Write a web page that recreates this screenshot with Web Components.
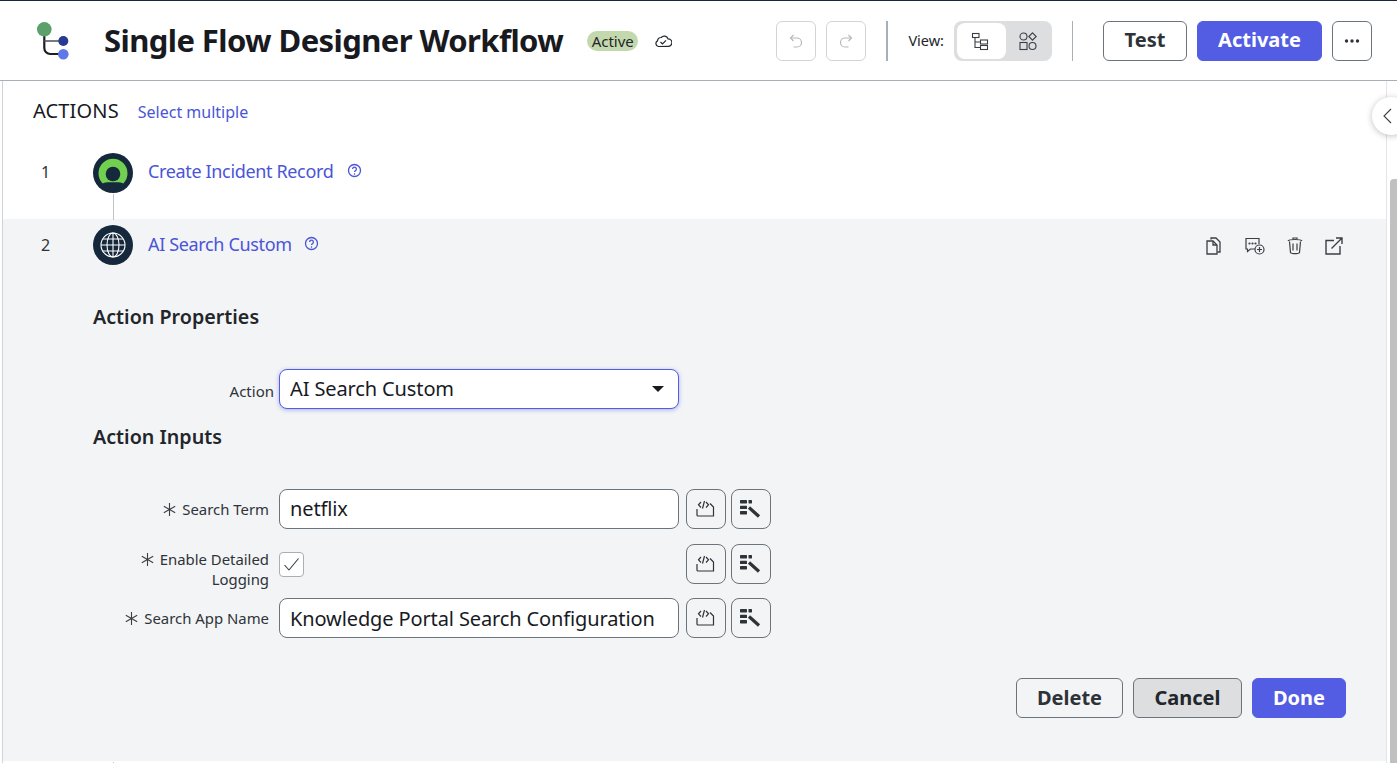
<!DOCTYPE html>
<html><head><meta charset="utf-8">
<style>
html,body{margin:0;padding:0;background:#fff;overflow:hidden}
body{font-family:"Noto Sans",sans-serif;color:#181a1f}
</style></head><body>

<flow-app></flow-app>

<script>
const sh=(el,html)=>{el.attachShadow({mode:'open'}).innerHTML=html;};
const S='fill="none" stroke="currentColor"';
const sym={
 undo:`<svg width="16" height="16" viewBox="0 0 16 16" ${S} stroke-width="1.2"><path d="M5.5 2 2.5 5l3 3"/><path d="M3 5h6a4.5 4.5 0 0 1 0 9H5.5"/></svg>`,
 redo:`<svg width="16" height="16" viewBox="0 0 16 16" ${S} stroke-width="1.2"><path d="M10.500 2 13.500 5l-3 3"/><path d="M13 5H7a4.500 4.500 0 0 0 0 9h3.500"/></svg>`,
 tree:`<svg width="20" height="20" viewBox="0 0 20 20" ${S} stroke-width="1.1"><rect x="2.500" y="2.500" width="6.500" height="4"/><rect x="10.500" y="9" width="7" height="4"/><rect x="10.500" y="14.500" width="7" height="4"/><path d="M5 6.500V16.500h5.500M5 11h5.500"/></svg>`,
 shapes:`<svg width="20" height="20" viewBox="0 0 20 20" ${S} stroke-width="1.1"><circle cx="5.500" cy="5.500" r="3.500"/><path d="M14.500 1.800 18.200 5.500 14.500 9.200 10.800 5.500Z"/><rect x="2" y="11.500" width="7" height="7"/><circle cx="14.500" cy="15" r="3.500"/></svg>`,
 cloud:`<svg width="18" height="16" viewBox="0 0 18 16" ${S} stroke-width="1.2"><path d="M4.500 13.500a3 3 0 0 1-1-5.600 3.400 3.400 0 0 1 3.700-3.400A4 4 0 0 1 14 5.800a3.800 3.800 0 0 1 .2 7.600Z"/><path d="m6.500 9 2 2 3.500-3.600"/></svg>`,
 help:`<svg width="15" height="15" viewBox="0 0 15 15" ${S} stroke-width="1.3"><circle cx="7.500" cy="7.500" r="6"/><path d="M5.600 6a1.900 1.900 0 1 1 2.900 1.600c-.7.400-1 .8-1 1.500"/><circle cx="7.500" cy="11" r=".5" fill="currentColor" stroke-width=".6"/></svg>`,
 copy:`<svg width="18" height="20" viewBox="0 0 18 20" ${S} stroke-width="1.300"><path d="M6 3.500V2h5l4 4v10h-2.500"/><path d="M2 5h6l4 4v9H2Z"/><path d="M8 5v4h4"/></svg>`,
 comment:`<svg width="22" height="20" viewBox="0 0 22 20" ${S} stroke-width="1.200"><path d="M11 13H6.500L3.500 15.500V13H2V2.500h13V8"/><circle cx="5.500" cy="7.500" r=".5"/><circle cx="8.500" cy="7.500" r=".5"/><circle cx="11.500" cy="7.500" r=".5"/><circle cx="15.500" cy="13.500" r="4.500"/><path d="M15.500 11v5M13 13.500h5"/></svg>`,
 trash:`<svg width="18" height="20" viewBox="0 0 18 20" ${S} stroke-width="1.200"><path d="M2 5c1-2 13-2 14 0"/><path d="M7 3.200V2h4v1.200"/><path d="M3.500 5.500 4.500 16.500c1 1.600 8 1.600 9 0l1-11"/><path d="M7 7.500v7M11 7.500v7"/></svg>`,
 open:`<svg width="20" height="20" viewBox="0 0 20 20" ${S} stroke-width="1.400"><path d="M10 4.500H2v13.500h14v-8"/><path d="M7.500 12.500 18 2M12 2h6v6"/></svg>`,
 code:`<svg width="20" height="20" viewBox="0 0 20 20" ${S} stroke-width="1.2"><path d="M1 10v6a1 1 0 0 0 1 1h15.500V8L14 4.500"/><path d="M5 3 2.500 5.800 5 8.500M8.500 2 6.500 9.500M10 3l2.500 2.800L10 8.500"/></svg>`,
 wand:`<svg width="22" height="20" viewBox="0 0 22 20"><g fill="currentColor"><rect x="0" y="1" width="7" height="3.400" rx=".6"/><rect x="8.500" y="1" width="3.500" height="3.400" rx=".6"/><rect x="0" y="6.700" width="7" height="3.400" rx=".6"/><rect x="0" y="12" width="7" height="3.400" rx=".6"/></g><path d="M9 8.500 19 17.500" stroke="currentColor" stroke-width="3.200" fill="none"/></svg>`,
 globe:`<svg width="26" height="26" viewBox="0 0 26 26" fill="none" stroke="#fff" stroke-width="1.100"><circle cx="13" cy="13" r="12"/><ellipse cx="13" cy="13" rx="6" ry="12"/><path d="M13 1v24M1 13h24M3 7h20M3 19h20"/></svg>`,
 logo:`<svg width="40" height="40" viewBox="0 0 40 40"><path fill="#71d04f" d="M9.700 30.400A14.500 14.500 0 1 1 30.300 30.400C27 28.800 24 29.200 20 29.200S13 28.800 9.700 30.400Z"/><circle cx="20" cy="21" r="7.300" fill="#16283c"/></svg>`,
 star:`<svg width="13" height="13" viewBox="0 0 13 13" fill="none" stroke="currentColor" stroke-width="1.100"><path d="M6.500 0v13M.8 3.200 12.200 9.800M.8 9.800 12.200 3.200"/></svg>`
};
class XIcon extends HTMLElement{connectedCallback(){if(this.shadowRoot)return;
  sh(this,`<style>:host{display:inline-flex;align-items:center;justify-content:center}svg{display:block}</style>${sym[this.getAttribute('name')]||''}`);}}
customElements.define('x-icon',XIcon);

class XBtn extends HTMLElement{connectedCallback(){if(this.shadowRoot)return;
  sh(this,`<style>
  :host{display:inline-flex;align-items:center;justify-content:center;box-sizing:border-box;height:40px;border:1px solid #6b737b;border-radius:6px;background:#fff;color:#2e3338;font:700 20px/1 "Noto Sans",sans-serif;white-space:nowrap}
  :host([kind=primary]){background:#525de4;border-color:#525de4;color:#fff}
  :host([kind=pressed]){background:#dcdee0;color:#22272c}
  :host([kind=ghost]){background:#f3f4f6}
  :host([kind=disabled]){border-color:#d2d4d6;color:#b5b8bb}
  :host([kind=tool]){background:#f3f4f6;color:#2e3338;border-radius:8px}
  </style><slot></slot>`);}}
customElements.define('x-btn',XBtn);

class FlowHeader extends HTMLElement{connectedCallback(){if(this.shadowRoot)return;
  sh(this,`<style>
  :host{display:flex;align-items:center;box-sizing:border-box;height:80px;flex:none;padding:0 25px 0 33px;border-bottom:1px solid #a8afb5;background:#fff}
  .logo{width:38px;height:42px;margin-right:33px}
  h1{margin:0;font:700 31px/40px "Noto Sans",sans-serif;color:#181a1f;white-space:nowrap;letter-spacing:-.58px;padding-bottom:1px}
  .badge{margin-left:24px;height:20px;width:51px;border-radius:10px;background:#c4d8ad;font-size:15px;line-height:20px;text-align:center;color:#22262a}
  .cloud{margin-left:16px;color:#22262a}
  .sp{flex:1}
  .sq{width:40px}
  .sep{width:2px;height:40px;background:#a8afb5}
  .sep.thin{width:1px}
  .view{font-size:14.500px;color:#22262a;margin:0 10px 2px 20px}
  .seg{display:flex;box-sizing:border-box;width:98px;height:40px;padding:2px 3px;background:#dcdee0;border-radius:8px}
  .seg div{width:49px;display:flex;align-items:center;justify-content:center;color:#3a3f44;border-radius:8px}
  .seg .on{background:#fff;padding-right:4px;box-sizing:border-box}
  .seg .off{width:43px}
  .t{padding-bottom:2px}
  </style>
  <svg class="logo" viewBox="0 0 38 42" fill="none">
    <path d="M11.300 12V28a6 6 0 0 0 6 6H28" stroke="#1c1e22" stroke-width="2.200"/><path d="M11.300 21H28" stroke="#555a60" stroke-width="1.600"/>
    <circle cx="11.300" cy="9.300" r="7.300" fill="#5ba06b"/>
    <circle cx="30.300" cy="21" r="5" fill="#283a92"/><circle cx="30.300" cy="34.300" r="5.300" fill="#6077ea"/></svg>
  <h1>Single Flow Designer Workflow</h1>
  <div class="badge">Active</div>
  <x-icon class="cloud" name="cloud"></x-icon>
  <div class="sp"></div>
  <x-btn class="sq" kind="disabled" style="margin-right:10px"><x-icon name="undo"></x-icon></x-btn>
  <x-btn class="sq" kind="disabled" style="margin-right:20px"><x-icon name="redo"></x-icon></x-btn>
  <div class="sep"></div>
  <div class="view">View:</div>
  <div class="seg"><div class="on"><x-icon name="tree"></x-icon></div><div class="off"><x-icon name="shapes"></x-icon></div></div>
  <div class="sep thin" style="margin:0 30px 0 20px"></div>
  <x-btn style="width:84px;margin-right:10px"><span class="t">Test</span></x-btn>
  <x-btn kind="primary" style="width:125px;margin-right:10px"><span class="t">Activate</span></x-btn>
  <x-btn class="sq"><svg width="16" height="4" viewBox="0 0 16 4" fill="#2e3338"><circle cx="2.500" cy="2" r="1.700"/><circle cx="8" cy="2" r="1.700"/><circle cx="13.500" cy="2" r="1.700"/></svg></x-btn>`);}}
customElements.define('flow-header',FlowHeader);

class ActionRow extends HTMLElement{connectedCallback(){if(this.shadowRoot)return;
  const icon=this.getAttribute('icon');
  sh(this,`<style>
  :host{display:flex;box-sizing:border-box;position:relative}
  .n{width:90px;padding-left:38px;box-sizing:border-box;font-size:16px;line-height:24px;color:#2e3338;margin-top:var(--nt,7px)}
  .ic{width:40px;height:40px;flex:none;margin-right:15px}
  .ic x-icon{display:flex;width:40px;height:40px;border-radius:50%;background:#16283c}
  a{font-size:18px;letter-spacing:-.35px;line-height:24px;color:#4a55d8;margin-top:var(--lt,6px);white-space:nowrap}
  x-icon.h{color:#4a55d8;margin:var(--ht,10px) 0 0 var(--hl,14px);align-self:flex-start}
  </style>
  <div class="n">${this.getAttribute('num')}</div><div class="ic"><x-icon name="${icon}"></x-icon></div>
  <a>${this.getAttribute('label')}</a><x-icon class="h" name="help"></x-icon><slot></slot>`);}}
customElements.define('action-row',ActionRow);

class FormRow extends HTMLElement{connectedCallback(){if(this.shadowRoot)return;
  const check=this.hasAttribute('check');
  sh(this,`<style>
  :host{display:flex;align-items:center;box-sizing:border-box;height:40px;margin-left:90px}
  .l{width:176px;flex:none;text-align:right;font-size:14.900px;line-height:20px;color:#2e3338;box-sizing:border-box;padding-top:${check?10:0}px}
  .l x-icon{display:inline-flex;margin-right:6px;vertical-align:-1px;color:#3a3f44}
  .f{flex:none;width:400px;margin-left:10px;height:40px;box-sizing:border-box;display:flex;align-items:center}
  .in{width:400px;height:40px;box-sizing:border-box;border:1px solid #6b737b;border-radius:8px;background:#fff;padding:0 10px;font-size:20px;letter-spacing:-.12px;line-height:var(--in-lh,38px);color:#181a1f;white-space:nowrap;overflow:hidden}
  .cb{width:25px;height:25px;box-sizing:border-box;border:1px solid #a8afb5;border-radius:4px;background:#fff;display:flex;align-items:center;justify-content:center}
  x-btn{width:40px;margin-left:7px;flex:none}
  x-btn+x-btn{margin-left:5px}
  </style>
  <div class="l"><x-icon name="star"></x-icon>${this.getAttribute('label')}</div>
  <div class="f">${check?`<div class="cb"><svg width="17" height="15" viewBox="0 0 17 15" fill="none" stroke="#3a3f44" stroke-width="1.100"><path d="M1.500 8 6 13 15.500 1.500"/></svg></div>`:`<div class="in">${this.getAttribute('value')}</div>`}</div>
  <x-btn kind="tool"><x-icon name="code"></x-icon></x-btn><x-btn kind="tool"><x-icon name="wand"></x-icon></x-btn>`);}}
customElements.define('form-row',FormRow);

class FlowApp extends HTMLElement{connectedCallback(){if(this.shadowRoot)return;
  sh(this,`<style>
  :host{display:flex;flex-direction:column;width:1397px;height:763px;overflow:hidden;box-sizing:border-box;border-top:1px solid #16283c;position:relative;background:#fff}
  .wrap{flex:1;display:flex;min-height:0}
  .edge{width:3px;box-sizing:border-box;background:#fff;border-right:1px solid #d0d4d8;flex:none}
  .main{flex:1;min-width:0;display:flex;flex-direction:column;overflow:hidden}
  .top{height:57px;flex:none;display:flex;align-items:center;padding-left:30px;padding-top:2px;box-sizing:border-box}
  .top b{font-weight:400;font-size:20px;letter-spacing:.15px;line-height:24px;color:#181a1f}
  .top a{font-size:16px;color:#4a55d8;margin-left:19px;line-height:24px;margin-top:3px}
  action-row.a1{height:81px;flex:none;padding-top:15px}
  .line{position:absolute;left:113px;top:193px;width:1px;height:26px;background:#c0c3c6}
  .panel{flex:none;background:#f3f4f6;height:542px;display:flex;flex-direction:column}
  action-row.a2{height:60px;flex:none;padding-top:6px;--nt:8px;--lt:7px;--ht:11px;--hl:12px}
  .tools{position:absolute;right:42px;top:17px;display:flex;color:#3a3f44;align-items:center}
  h2{font:600 19.700px/24px "Noto Sans",sans-serif;color:#22262a;margin:0 0 0 90px}
  form-row{flex:none}
  .btns{display:flex;justify-content:flex-end;gap:10px;padding-right:40px;margin-top:40px}
  .sel{width:400px;height:40px;box-sizing:border-box;border:1px solid #525de4;border-radius:8px;background:#fff;box-shadow:0 1px 4px rgba(82,93,228,.45);display:flex;align-items:center;justify-content:space-between;padding:0 14px 2px 10px;font-size:20px;letter-spacing:-.12px;color:#181a1f;margin-left:5px}
  .sel svg{margin-top:2px}
  .arow{display:flex;align-items:center;height:40px;margin-top:40px}
  .arow span{width:271px;text-align:right;font-size:15px;color:#2e3338;margin-top:3px}
  .rail{width:11px;flex:none;border-left:1px solid #e4e5e6;box-sizing:border-box;display:flex;flex-direction:column;background:#fff;padding-left:3px}
  .rail i{display:block;margin-top:98px;flex:1;background:#c0c0c0;border-top-left-radius:4px}
  .tail{position:absolute;left:113px;top:761px;width:1px;height:2px;background:#c0c3c6}
  .tab{position:absolute;right:-13px;top:96px;width:38px;height:38px;border-radius:50%;background:#fff;box-shadow:0 1px 6px rgba(0,0,0,.25);display:flex;align-items:center;padding-left:11px;box-sizing:border-box}
  </style>
  <flow-header></flow-header>
  <div class="wrap"><div class="edge"></div>
   <div class="main">
    <div class="top"><b>ACTIONS</b><a>Select multiple</a></div>
    <action-row class="a1" num="1" icon="logo" label="Create Incident Record"></action-row>
    <div class="panel">
      <action-row class="a2" num="2" icon="globe" label="AI Search Custom"><div class="tools">
        <x-icon name="copy" style="margin-right:21px"></x-icon><x-icon name="comment" style="margin-right:20px"></x-icon><x-icon name="trash" style="margin-right:20px"></x-icon><x-icon name="open"></x-icon></div></action-row>
      <h2 style="margin-top:26px">Action Properties</h2>
      <div class="arow"><span>Action</span><div class="sel">AI Search Custom<svg width="12" height="6" viewBox="0 0 12 6" fill="#181a1f"><path d="M0 0h12L6 6Z"/></svg></div></div>
      <h2 style="margin-top:16px">Action Inputs</h2>
      <form-row label="Search Term" value="netflix" style="margin-top:40px"></form-row>
      <form-row label="Enable Detailed Logging" check style="margin-top:15px"></form-row>
      <form-row label="Search App Name" value="Knowledge Portal Search Configuration" style="margin-top:14px;--in-lh:40px"></form-row>
      <div class="btns"><x-btn kind="ghost" style="width:107px">Delete</x-btn><x-btn kind="pressed" style="width:109px">Cancel</x-btn><x-btn kind="primary" style="width:94px">Done</x-btn></div>
    </div>
   </div>
   <div class="rail"><i></i></div>
  </div>
  <div class="line"></div><div class="tail"></div>
  <div class="tab"><svg width="9" height="16" viewBox="0 0 9 16" fill="none" stroke="#3a3f44" stroke-width="1.100"><path d="M8 1 1 8l7 7"/></svg></div>`);}}
customElements.define('flow-app',FlowApp);
</script>
</body></html>
